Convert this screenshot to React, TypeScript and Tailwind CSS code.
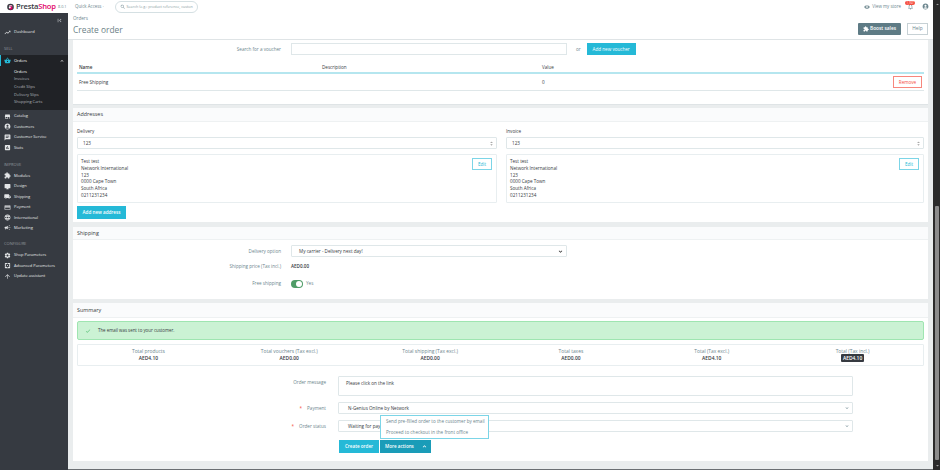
import {
  MdAccountCircle,
  MdArrowDropDown,
  MdArrowDropUp,
  MdArrowUpward,
  MdAssessment,
  MdCampaign,
  MdCheck,
  MdChat,
  MdDesktopMac,
  MdExpandLess,
  MdExpandMore,
  MdExtension,
  MdFirstPage,
  MdLanguage,
  MdLocalShipping,
  MdNotificationsNone,
  MdPayment,
  MdSearch,
  MdSettings,
  MdSettingsApplications,
  MdShoppingBasket,
  MdStore,
  MdTrendingUp,
  MdUnfoldMore,
  MdVisibility,
} from "react-icons/md"
import type { ReactNode } from "react"

const subLinks = ["Orders", "Invoices", "Credit Slips", "Delivery Slips", "Shopping Carts"]

const sellLinks = [
  { label: "Catalog", icon: MdStore },
  { label: "Customers", icon: MdAccountCircle },
  { label: "Customer Service", icon: MdChat },
  { label: "Stats", icon: MdAssessment },
]

const improveLinks = [
  { label: "Modules", icon: MdExtension },
  { label: "Design", icon: MdDesktopMac },
  { label: "Shipping", icon: MdLocalShipping },
  { label: "Payment", icon: MdPayment },
  { label: "International", icon: MdLanguage },
  { label: "Marketing", icon: MdCampaign },
]

const configureLinks = [
  { label: "Shop Parameters", icon: MdSettings },
  { label: "Advanced Parameters", icon: MdSettingsApplications },
  { label: "Update assistant", icon: MdArrowUpward },
]

const totals = [
  { label: "Total products", value: "AED4.10" },
  { label: "Total vouchers (Tax excl.)", value: "AED0.00" },
  { label: "Total shipping (Tax excl.)", value: "AED0.00" },
  { label: "Total taxes", value: "AED0.00" },
  { label: "Total (Tax excl.)", value: "AED4.10" },
  { label: "Total (Tax incl.)", value: "AED4.10", dark: true },
]

function NavLink({ label, icon: Icon }: { label: string; icon: typeof MdStore }) {
  return (
    <div className="flex h-[10.4px] items-center pl-[4px] text-[4px] text-[#e8eaec]">
      <Icon className="h-[7px] w-[7px] text-[#e3e5e7]" />
      <span className="ml-[3px]">{label}</span>
    </div>
  )
}

function SectionTitle({ children, className }: { children: ReactNode; className: string }) {
  return <div className={`pl-[4px] text-[4px] uppercase text-[#8f959c] ${className}`}>{children}</div>
}

function Sidebar() {
  return (
    <aside className="flex w-[68px] shrink-0 flex-col bg-[#363a41]">
      <div className="flex h-[14px] items-center justify-end pr-[5px]">
        <MdFirstPage className="h-[7px] w-[7px] text-[#c8ccd0]" />
      </div>
      <NavLink label="Dashboard" icon={MdTrendingUp} />
      <SectionTitle className="mt-[9px] mb-[3px]">Sell</SectionTitle>
      <div className="bg-[#202226] pb-[4px]">
        <div className="flex h-[10.4px] items-center border-l border-[#25b9d7] pl-[3px] pr-[3px] text-[4px] text-white">
          <MdShoppingBasket className="h-[7px] w-[7px] text-[#25b9d7]" />
          <span className="ml-[3px] flex-1">Orders</span>
          <MdExpandLess className="h-[6px] w-[6px]" />
        </div>
        <div className="pt-[2px]">
          {subLinks.map((link, i) => (
            <div
              key={link}
              className={`flex h-[7.7px] items-center pl-[14px] text-[4px] ${i === 0 ? "text-white" : "text-[#b5b9bd]"}`}
            >
              {link}
            </div>
          ))}
        </div>
      </div>
      <div className="pt-[1px]">
        {sellLinks.map((link) => (
          <NavLink key={link.label} {...link} />
        ))}
      </div>
      <SectionTitle className="mt-[9px] mb-[3px]">Improve</SectionTitle>
      {improveLinks.map((link) => (
        <NavLink key={link.label} {...link} />
      ))}
      <SectionTitle className="mt-[8px] mb-[3px]">Configure</SectionTitle>
      {configureLinks.map((link) => (
        <NavLink key={link.label} {...link} />
      ))}
    </aside>
  )
}

function TopBar() {
  return (
    <header className="flex h-[13px] shrink-0 items-center whitespace-nowrap bg-white pl-[7px] pr-[4px]">
      <svg viewBox="0 0 20 20" className="h-[8px] w-[7px] shrink-0">
        <circle cx="10" cy="10" r="9.5" fill="#363a41" />
        <path d="M5 7c2-4 9-4 11 1l-3 1c-2-2-5-2-8-2z" fill="#f5a9c9" />
        <circle cx="11" cy="13" r="5" fill="#df0067" />
        <circle cx="8" cy="11" r="3" fill="#fff" />
      </svg>
      <span className="ml-[2px] w-[40px] text-[7.6px] font-semibold tracking-[-0.2px] text-[#363a41]">
        Presta<span className="text-[#df0067]">Shop</span>
      </span>
      <span className="ml-[2px] w-[8px] text-[3.8px] text-[#6c868e]">8.0.1</span>
      <span className="ml-[9px] flex w-[30px] items-center gap-[1px] text-[4.4px] text-[#6c868e]">
        Quick Access
        <MdExpandMore className="h-[5px] w-[5px]" />
      </span>
      <div className="ml-[10px] flex h-[12px] w-[83px] items-center rounded-full border border-[#d5e0e3] pl-[4px] text-[3.7px] text-[#8a9ca3]">
        <MdSearch className="mr-[1px] h-[5.5px] w-[5.5px] shrink-0 text-[#6c868e]" />
        Search (e.g.: product reference, custon
      </div>
      <div className="ml-auto flex items-center text-[4.4px] text-[#6c868e]">
        <MdVisibility className="mr-[2px] h-[6px] w-[6px]" />
        View my store
        <div className="relative ml-[6px] mr-[8px]">
          <MdNotificationsNone className="h-[7px] w-[7px]" />
          <span className="absolute -top-[2px] -left-[2px] rounded-full bg-[#f54c3e] px-[1.5px] text-[2.8px] leading-[4px] text-white">
            1,767
          </span>
        </div>
        <MdAccountCircle className="h-[7px] w-[7px]" />
      </div>
    </header>
  )
}

function PageHeader() {
  return (
    <div className="flex h-[27px] shrink-0 border-b border-[#dfe4e6] bg-white pr-[5px] pl-[5px]">
      <div>
        <div className="mt-[2px] text-[4.6px] leading-[6px] text-[#6c868e]">Orders</div>
        <h1 className="mt-[2px] text-[8.4px] leading-[13px] text-[#6c7f87]">Create order</h1>
      </div>
      <div className="ml-auto mt-[10px] flex gap-[6px]">
        <button className="flex h-[12px] w-[43px] items-center justify-center rounded-[1px] bg-[#5e7b85] text-[4.8px] font-semibold text-white">
          <MdExtension className="mr-[1px] h-[6px] w-[6px]" />
          Boost sales
        </button>
        <button className="h-[12px] w-[21px] border border-[#c7d1d5] bg-white text-[4.8px] text-[#6c868e]">Help</button>
      </div>
    </div>
  )
}

function Card({ title, className, headClass, children }: { title?: string; className: string; headClass?: string; children: ReactNode }) {
  return (
    <section className={`bg-white ${className}`}>
      {title && (
        <div className={`flex items-center border-b border-[#eef1f2] bg-[#fafbfc] pl-[4px] text-[5.4px] font-medium text-[#363a41] ${headClass ?? "h-[14px]"}`}>
          {title}
        </div>
      )}
      {children}
    </section>
  )
}

function FieldSelect({ value, className, arrows, strong }: { value: string; className: string; arrows?: boolean; strong?: boolean }) {
  return (
    <div
      className={`flex items-center justify-between rounded-[1px] border border-[#dfe7e9] bg-white pr-[2px] text-[4.6px] text-[#363a41] ${className}`}
    >
      {value}
      {arrows ? (
        <MdUnfoldMore className="h-[5px] w-[5px] text-[#555]" />
      ) : (
        <MdExpandMore className={strong ? "h-[7px] w-[7px] text-[#222]" : "h-[6px] w-[6px] text-[#6c868e]"} />
      )}
    </div>
  )
}

function AddressBox({ className }: { className: string }) {
  return (
    <div className={`relative h-[49px] rounded-[1px] border border-[#e8eef0] pl-[3px] pt-[3px] text-[4.6px] leading-[6.8px] text-[#363a41] ${className}`}>
      <div>Test test</div>
      <div>Network International</div>
      <div>123</div>
      <div>0000 Cape Town</div>
      <div>South Africa</div>
      <div>0211231234</div>
      <button className="absolute right-[4px] top-[3px] h-[12px] w-[20px] border border-[#7cd5e7] text-[4.6px] text-[#25b9d7]">
        Edit
      </button>
    </div>
  )
}

function Label({ children, className }: { children: ReactNode; className: string }) {
  return <span className={`text-right text-[4.6px] text-[#6c868e] ${className}`}>{children}</span>
}

function VoucherCard() {
  return (
    <Card className="h-[65px] border-b border-[#dfe4e6] px-[4px]">
      <div className="flex items-center pt-[3px]">
        <Label className="w-[204px]">Search for a voucher</Label>
        <div className="ml-[10px] h-[12px] w-[276px] border border-[#dfe7e9]" />
        <span className="ml-[9px] text-[4.6px] text-[#6c868e]">or</span>
        <button className="ml-[6px] h-[12px] w-[49px] bg-[#25b9d7] text-[4.6px] text-white">Add new voucher</button>
      </div>
      <div className="mt-[8px] grid h-[11px] grid-cols-[243px_220px_1fr] items-center border-b-2 border-[#b5e6ef] pl-[2px] text-[4.6px] font-semibold text-[#363a41]">
        <span>Name</span>
        <span className="font-normal">Description</span>
        <span className="font-normal">Value</span>
      </div>
      <div className="grid h-[17px] grid-cols-[243px_220px_1fr_auto] items-center border-b border-[#dfe7e9] pl-[2px] pr-[2px] text-[4.6px] text-[#363a41]">
        <span>Free Shipping</span>
        <span />
        <span>0</span>
        <button className="h-[12px] w-[29px] border border-[#f7877d] text-[4.6px] text-[#f54c3e]">Remove</button>
      </div>
    </Card>
  )
}

function AddressesCard() {
  return (
    <Card title="Addresses" className="mt-[3px] h-[114px]">
      <div className="grid grid-cols-[420px_418px] gap-x-[9px] pl-[4px] pt-[5px]">
        <div>
          <div className="text-[4.6px] leading-[8px] text-[#363a41]">Delivery</div>
          <FieldSelect value="123" arrows className="mt-[2px] h-[12px] pl-[5px]" />
          <AddressBox className="mt-[5px]" />
        </div>
        <div>
          <div className="text-[4.6px] leading-[8px] text-[#363a41]">Invoice</div>
          <FieldSelect value="123" arrows className="mt-[2px] h-[12px] pl-[5px]" />
          <AddressBox className="mt-[5px]" />
        </div>
      </div>
      <button className="ml-[4px] mt-[3px] block h-[13px] w-[49px] bg-[#25b9d7] text-[4.6px] font-semibold text-white">
        Add new address
      </button>
    </Card>
  )
}

function ShippingCard() {
  return (
    <Card title="Shipping" headClass="h-[13px]" className="mt-[5px] h-[72px]">
      <div className="flex items-center pt-[5px]">
        <Label className="w-[208px]">Delivery option</Label>
        <FieldSelect value="My carrier - Delivery next day!" strong className="ml-[10px] h-[12px] w-[276px] pl-[7px]" />
      </div>
      <div className="mt-[6px] flex items-center">
        <Label className="w-[208px]">Shipping price (Tax incl.)</Label>
        <span className="ml-[10px] text-[4.6px] font-semibold text-[#363a41]">AED0.00</span>
      </div>
      <div className="mt-[10px] flex items-center">
        <Label className="w-[208px]">Free shipping</Label>
        <span className="ml-[10px] flex h-[8px] w-[12px] items-center justify-end rounded-full bg-[#4f9c67] pr-[1px]">
          <span className="h-[6px] w-[6px] rounded-full bg-white" />
        </span>
        <span className="ml-[3px] text-[4.6px] text-[#6c868e]">Yes</span>
      </div>
    </Card>
  )
}

function SummaryCard() {
  return (
    <Card title="Summary" headClass="h-[15px]" className="mt-[4px] h-[158px]">
      <div className="mx-[4px] mt-[3px] flex h-[19px] items-center rounded-[2px] border border-[#9fe5b1] bg-[#cbf2d4] pl-[7px] text-[4.4px] text-[#363a41]">
        <MdCheck className="mr-[7px] h-[6px] w-[6px] text-[#4cbb6c]" />
        The email was sent to your customer.
      </div>
      <div className="mx-[4px] mt-[4px] grid h-[22px] grid-cols-6 rounded-[1px] border border-[#e8eef0] pt-[3px] text-center text-[4.9px] leading-[7px]">
        {totals.map((t) => (
          <div key={t.label}>
            <div className="text-[#6c868e]">{t.label}</div>
            <span className={t.dark ? "rounded-[1px] bg-[#363a41] px-[2px] py-[1px] font-semibold text-white" : "font-semibold text-[#363a41]"}>
              {t.value}
            </span>
          </div>
        ))}
      </div>
      <div className="mt-[10px] flex">
        <Label className="mt-[3px] w-[253px]">Order message</Label>
        <div className="ml-[12px] h-[20px] w-[515px] rounded-[1px] border border-[#dfe7e9] pl-[7px] pt-[3px] text-[4.6px] text-[#363a41]">
          Please click on the link
        </div>
      </div>
      <div className="mt-[6px] flex items-center">
        <Label className="w-[253px]">
          <span className="mr-[5px] text-[#f54c3e]">*</span>Payment
        </Label>
        <FieldSelect value="N-Genius Online by Network" className="ml-[12px] h-[12px] w-[515px] pl-[9px]" />
      </div>
      <div className="mt-[6px] flex items-center">
        <Label className="w-[253px]">
          <span className="mr-[5px] text-[#f54c3e]">*</span>Order status
        </Label>
        <FieldSelect value="Waiting for payment" className="ml-[12px] h-[12px] w-[515px] pl-[9px]" />
      </div>
      <div className="relative ml-[266px] mt-[8px] flex gap-[1px]">
        <div className="absolute bottom-[14px] left-[41px] z-10 flex h-[24px] w-[109px] flex-col justify-around border border-[#7cd5e7] bg-white pl-[5px] text-[4.6px] text-[#6c868e]">
          <span>Send pre-filled order to the customer by email</span>
          <span>Proceed to checkout in the front office</span>
        </div>
        <button className="h-[13px] w-[40px] bg-[#25b9d7] text-[4.6px] font-semibold text-white">Create order</button>
        <button className="flex h-[13px] w-[51px] items-center justify-between bg-[#1a9cb8] pl-[5px] pr-[3px] text-[4.6px] font-semibold text-white">
          More actions
          <MdExpandLess className="h-[7px] w-[7px]" />
        </button>
      </div>
    </Card>
  )
}

function Scrollbar() {
  return (
    <div className="flex w-[7px] shrink-0 flex-col items-center bg-[#2b2b2b] py-[1px] pl-[1px]">
      <MdArrowDropUp className="h-[7px] w-[7px] text-[#a0a0a0]" />
      <div className="mt-[198px] h-[254px] w-[4px] rounded-[1px] bg-[#8c8c8c]" />
      <MdArrowDropDown className="mt-auto h-[7px] w-[7px] text-[#a0a0a0]" />
    </div>
  )
}

export default function App() {
  return (
    <div
      className="flex h-[470px] w-[940px] overflow-hidden bg-[#eaedee]"
      style={{ fontFamily: '"Open Sans", "Noto Sans", sans-serif' }}
    >
      <div className="flex min-w-0 flex-1 flex-col">
        <TopBar />
        <div className="flex min-h-0 flex-1">
          <Sidebar />
          <main className="flex min-w-0 flex-1 flex-col">
            <PageHeader />
            <div className="pl-[5px] pr-[5px]">
              <VoucherCard />
              <AddressesCard />
              <ShippingCard />
              <SummaryCard />
            </div>
            <div className="mt-auto h-px bg-[#6b6f73]" />
          </main>
        </div>
      </div>
      <Scrollbar />
    </div>
  )
}
